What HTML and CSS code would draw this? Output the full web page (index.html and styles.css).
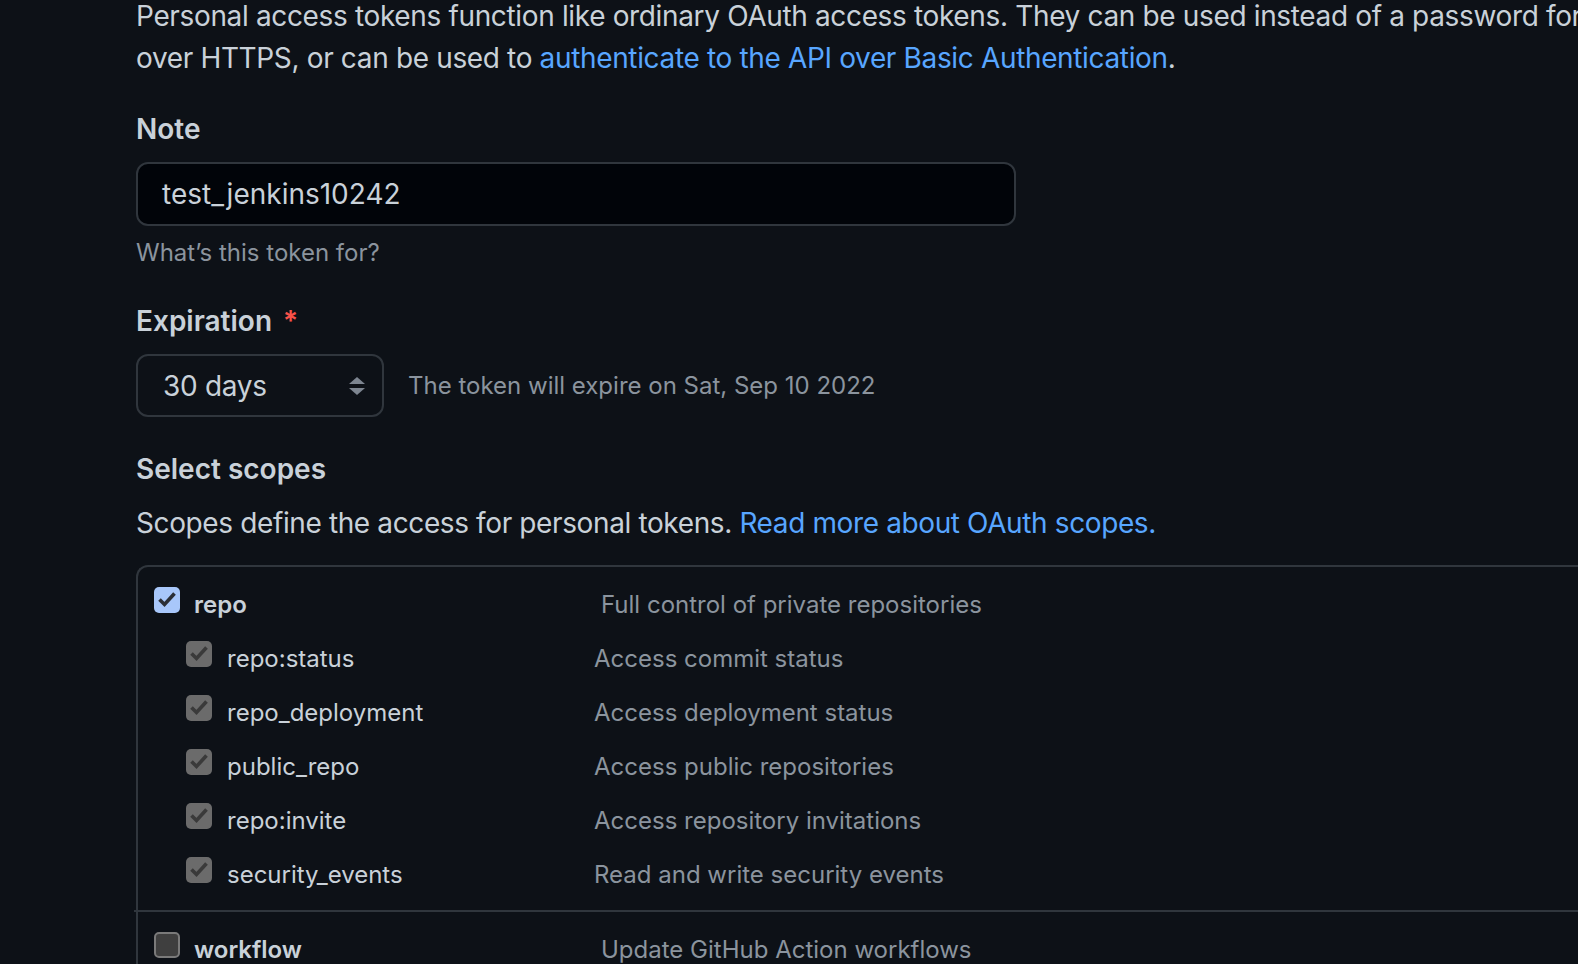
FILE: index.html
```html
<!DOCTYPE html>
<html lang="en">
<head>
<meta charset="utf-8">
<title>New personal access token</title>
<link rel="stylesheet" href="styles.css">
</head>
<body>
<main class="page">
  <p class="intro">Personal access tokens function like ordinary OAuth access tokens. They can be used instead of a password for Git over HTTPS, or can be used to <a href="#" class="link">authenticate to the API over Basic Authentication</a>.</p>

  <div class="field note-field">
    <label class="label">Note</label>
    <div class="input">test_jenkins10242</div>
    <p class="hint">What’s this token for?</p>
  </div>

  <div class="field exp-field">
    <label class="label">Expiration <span class="req">*</span></label>
    <div class="exp-row">
      <div class="select">
        <span>30 days</span>
        <svg class="arrows" width="18" height="20" viewBox="0 0 18 20"><path d="M9 1 L17 8 L1 8 Z" fill="#7d8590"/><path d="M1 12 L17 12 L9 19 Z" fill="#7d8590"/></svg>
      </div>
      <span class="exp-note">The token will expire on Sat, Sep 10 2022</span>
    </div>
  </div>

  <h3 class="scopes-title">Select scopes</h3>
  <p class="scopes-desc">Scopes define the access for personal tokens. <a href="#" class="link">Read more about OAuth scopes.</a></p>

  <div class="scopes">
    <ul class="group">
      <li class="row top">
        <span class="cb cb-on"><svg width="26" height="26" viewBox="0 0 26 26"><path d="M5.5 12.5 L10.5 17.5 L20.5 6.5" fill="none" stroke="#2b2f36" stroke-width="3.6"/></svg></span>
        <span class="name bold">repo</span>
        <span class="desc">Full control of private repositories</span>
      </li>
      <li class="row sub">
        <span class="cb cb-dis"><svg width="26" height="26" viewBox="0 0 26 26"><path d="M5.5 12.5 L10.5 17.5 L20.5 6.5" fill="none" stroke="#3a3a3a" stroke-width="3.6"/></svg></span>
        <span class="name">repo:status</span>
        <span class="desc">Access commit status</span>
      </li>
      <li class="row sub">
        <span class="cb cb-dis"><svg width="26" height="26" viewBox="0 0 26 26"><path d="M5.5 12.5 L10.5 17.5 L20.5 6.5" fill="none" stroke="#3a3a3a" stroke-width="3.6"/></svg></span>
        <span class="name">repo_deployment</span>
        <span class="desc">Access deployment status</span>
      </li>
      <li class="row sub">
        <span class="cb cb-dis"><svg width="26" height="26" viewBox="0 0 26 26"><path d="M5.5 12.5 L10.5 17.5 L20.5 6.5" fill="none" stroke="#3a3a3a" stroke-width="3.6"/></svg></span>
        <span class="name">public_repo</span>
        <span class="desc">Access public repositories</span>
      </li>
      <li class="row sub">
        <span class="cb cb-dis"><svg width="26" height="26" viewBox="0 0 26 26"><path d="M5.5 12.5 L10.5 17.5 L20.5 6.5" fill="none" stroke="#3a3a3a" stroke-width="3.6"/></svg></span>
        <span class="name">repo:invite</span>
        <span class="desc">Access repository invitations</span>
      </li>
      <li class="row sub">
        <span class="cb cb-dis"><svg width="26" height="26" viewBox="0 0 26 26"><path d="M5.5 12.5 L10.5 17.5 L20.5 6.5" fill="none" stroke="#3a3a3a" stroke-width="3.6"/></svg></span>
        <span class="name">security_events</span>
        <span class="desc">Read and write security events</span>
      </li>
    </ul>
    <ul class="group second">
      <li class="row top">
        <span class="cb cb-off"></span>
        <span class="name bold">workflow</span>
        <span class="desc">Update GitHub Action workflows</span>
      </li>
    </ul>
  </div>
</main>
</body>
</html>
```
FILE: styles.css
```css
html, body {
  margin: 0;
  padding: 0;
  background: #0d1117;
  height: 100%;
  overflow: hidden;
}
body {
  font-family: Inter, "Noto Sans", "Liberation Sans", sans-serif;
  color: #c9d1d9;
  font-size: 28px;
}
.page {
  padding-left: 136px;
  width: 1700px;
}
.intro {
  margin: -5px 0 0 0;
  font-size: 28px;
  letter-spacing: -0.35px;
  line-height: 42px;
  width: 1520px;
}
.link {
  color: #58a6ff;
  text-decoration: none;
}
.field {
  display: flex;
  flex-direction: column;
  align-items: flex-start;
}
.note-field {
  margin-top: 32px;
}
.label {
  font-weight: 600;
  font-size: 28px;
  line-height: 36px;
}
.req {
  color: #f85149;
  margin-left: 4px;
}
.input {
  margin-top: 15px;
  box-sizing: border-box;
  width: 880px;
  height: 64px;
  border: 2px solid #30363d;
  border-radius: 12px;
  background: #010409;
  padding: 0 24px;
  font-size: 28px;
  line-height: 60px;
  color: #c9d1d9;
}
.hint {
  margin: 11px 0 0 0;
  font-size: 24px;
  line-height: 32px;
  color: #8b949e;
}
.exp-field {
  margin-top: 34px;
}
.exp-row {
  margin-top: 15px;
  display: flex;
  align-items: center;
  gap: 24px;
}
.select {
  box-sizing: border-box;
  width: 248px;
  height: 63px;
  border: 2px solid #30363d;
  border-radius: 12px;
  background: #0d1117;
  display: flex;
  align-items: center;
  justify-content: space-between;
  padding: 0 16px 0 25px;
  font-size: 28px;
  letter-spacing: -0.3px;
  color: #c9d1d9;
}
.arrows {
  display: block;
}
.exp-note {
  font-size: 24px;
  color: #8b949e;
}
.scopes-title {
  margin: 34px 0 0 0;
  font-size: 28px;
  font-weight: 600;
  line-height: 36px;
}
.scopes-desc {
  margin: 16px 0 0 0;
  font-size: 28px;
  letter-spacing: -0.38px;
  line-height: 40px;
}
.scopes {
  margin-top: 22px;
  border: 2px solid #30363d;
  border-right: none;
  border-radius: 12px 0 0 12px;
  height: 600px;
}
.group {
  list-style: none;
  margin: 0;
  padding: 10px 0 9px 0;
}
.group.second {
  border-top: 2px solid #30363d;
  margin-left: -4px;
  padding-left: 4px;
  padding-top: 10px;
}
.row {
  display: flex;
  align-items: center;
  height: 54px;
}
.row.top {
  padding-left: 16px;
}
.row.sub {
  padding-left: 48px;
}
.cb {
  box-sizing: border-box;
  width: 26px;
  height: 26px;
  border-radius: 5px;
  flex: none;
  margin-top: -8px;
}
.cb svg {
  display: block;
}
.cb-on {
  background: #a8c7fa;
}
.cb-dis {
  background: #6b6b6b;
}
.cb-off {
  background: #3f3f3f;
  border: 2px solid #7a7a7a;
}
.name {
  font-size: 24px;
  color: #c9d1d9;
}
.row.top .name {
  margin-left: 14px;
  width: 407px;
}
.row.sub .name {
  margin-left: 15px;
  width: 367px;
}
.bold {
  font-weight: 600;
}
.desc {
  font-size: 24px;
  color: #8b949e;
}
```
